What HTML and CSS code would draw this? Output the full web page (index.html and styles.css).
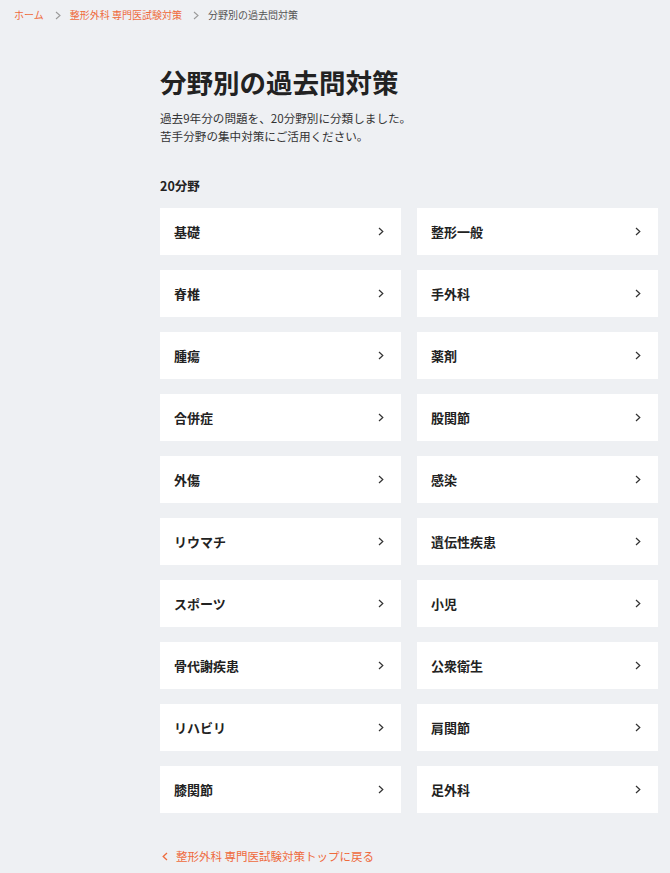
FILE: index.html
```html
<!DOCTYPE html>
<html lang="ja">
<head>
<meta charset="utf-8">
<title>分野別の過去問対策</title>
<link rel="stylesheet" href="styles.css">
</head>
<body>
<nav class="crumbs">
  <a class="crumb-link" href="#">ホーム</a>
  <span class="crumb-sep"><svg width="6" height="9" viewBox="0 0 6 9"><polyline points="1,1 5,4.5 1,8" fill="none" stroke="#9a9a9a" stroke-width="1.1"/></svg></span>
  <a class="crumb-link" href="#">整形外科 専門医試験対策</a>
  <span class="crumb-sep"><svg width="6" height="9" viewBox="0 0 6 9"><polyline points="1,1 5,4.5 1,8" fill="none" stroke="#9a9a9a" stroke-width="1.1"/></svg></span>
  <span class="crumb-current">分野別の過去問対策</span>
</nav>
<main class="main">
  <h1 class="title">分野別の過去問対策</h1>
  <p class="lead">過去9年分の問題を、20分野別に分類しました。<br>苦手分野の集中対策にご活用ください。</p>
  <h2 class="count">20分野</h2>
  <ul class="grid">
    <li><a class="card" href="#"><span>基礎</span><svg class="chev" viewBox="0 0 6 9"><polyline points="1,1 4.8,4.5 1,8"/></svg></a></li>
    <li><a class="card" href="#"><span>整形一般</span><svg class="chev" viewBox="0 0 6 9"><polyline points="1,1 4.8,4.5 1,8"/></svg></a></li>
    <li><a class="card" href="#"><span>脊椎</span><svg class="chev" viewBox="0 0 6 9"><polyline points="1,1 4.8,4.5 1,8"/></svg></a></li>
    <li><a class="card" href="#"><span>手外科</span><svg class="chev" viewBox="0 0 6 9"><polyline points="1,1 4.8,4.5 1,8"/></svg></a></li>
    <li><a class="card" href="#"><span>腫瘍</span><svg class="chev" viewBox="0 0 6 9"><polyline points="1,1 4.8,4.5 1,8"/></svg></a></li>
    <li><a class="card" href="#"><span>薬剤</span><svg class="chev" viewBox="0 0 6 9"><polyline points="1,1 4.8,4.5 1,8"/></svg></a></li>
    <li><a class="card" href="#"><span>合併症</span><svg class="chev" viewBox="0 0 6 9"><polyline points="1,1 4.8,4.5 1,8"/></svg></a></li>
    <li><a class="card" href="#"><span>股関節</span><svg class="chev" viewBox="0 0 6 9"><polyline points="1,1 4.8,4.5 1,8"/></svg></a></li>
    <li><a class="card" href="#"><span>外傷</span><svg class="chev" viewBox="0 0 6 9"><polyline points="1,1 4.8,4.5 1,8"/></svg></a></li>
    <li><a class="card" href="#"><span>感染</span><svg class="chev" viewBox="0 0 6 9"><polyline points="1,1 4.8,4.5 1,8"/></svg></a></li>
    <li><a class="card" href="#"><span>リウマチ</span><svg class="chev" viewBox="0 0 6 9"><polyline points="1,1 4.8,4.5 1,8"/></svg></a></li>
    <li><a class="card" href="#"><span>遺伝性疾患</span><svg class="chev" viewBox="0 0 6 9"><polyline points="1,1 4.8,4.5 1,8"/></svg></a></li>
    <li><a class="card" href="#"><span>スポーツ</span><svg class="chev" viewBox="0 0 6 9"><polyline points="1,1 4.8,4.5 1,8"/></svg></a></li>
    <li><a class="card" href="#"><span>小児</span><svg class="chev" viewBox="0 0 6 9"><polyline points="1,1 4.8,4.5 1,8"/></svg></a></li>
    <li><a class="card" href="#"><span>骨代謝疾患</span><svg class="chev" viewBox="0 0 6 9"><polyline points="1,1 4.8,4.5 1,8"/></svg></a></li>
    <li><a class="card" href="#"><span>公衆衛生</span><svg class="chev" viewBox="0 0 6 9"><polyline points="1,1 4.8,4.5 1,8"/></svg></a></li>
    <li><a class="card" href="#"><span>リハビリ</span><svg class="chev" viewBox="0 0 6 9"><polyline points="1,1 4.8,4.5 1,8"/></svg></a></li>
    <li><a class="card" href="#"><span>肩関節</span><svg class="chev" viewBox="0 0 6 9"><polyline points="1,1 4.8,4.5 1,8"/></svg></a></li>
    <li><a class="card" href="#"><span>膝関節</span><svg class="chev" viewBox="0 0 6 9"><polyline points="1,1 4.8,4.5 1,8"/></svg></a></li>
    <li><a class="card" href="#"><span>足外科</span><svg class="chev" viewBox="0 0 6 9"><polyline points="1,1 4.8,4.5 1,8"/></svg></a></li>
  </ul>
  <a class="back" href="#"><svg class="back-chev" viewBox="0 0 6 9"><polyline points="5,1 1.2,4.5 5,8"/></svg>整形外科 専門医試験対策トップに戻る</a>
</main>
</body>
</html>
```

FILE: styles.css
```css
html, body {
  margin: 0;
  padding: 0;
}
body {
  background: #eef0f3;
  color: #222;
  font-family: "Noto Sans CJK JP", "Noto Sans", sans-serif;
  width: 670px;
  min-height: 873px;
}
a {
  text-decoration: none;
}
.crumbs {
  display: flex;
  align-items: center;
  height: 30px;
  padding-left: 14px;
  font-size: 10px;
  line-height: 30px;
}
.crumb-link {
  color: #ee6a3c;
}
.crumb-sep {
  display: flex;
  align-items: center;
  margin: 0 9px 0 11px;
}
.crumb-current {
  color: #555;
}
.main {
  margin-left: 160px;
  width: 498px;
}
.title {
  margin: 34px 0 0;
  font-size: 26.5px;
  line-height: 36px;
  font-weight: 700;
  color: #222;
}
.lead {
  margin: 9px 0 0;
  font-size: 11.6px;
  line-height: 18px;
  color: #333;
}
.count {
  margin: 32px 0 0;
  font-size: 12.5px;
  line-height: 18px;
  font-weight: 700;
}
.grid {
  list-style: none;
  margin: 13px 0 0;
  padding: 0;
  display: grid;
  grid-template-columns: 1fr 1fr;
  column-gap: 16px;
  row-gap: 15px;
}
.card {
  display: flex;
  align-items: center;
  justify-content: space-between;
  height: 47px;
  padding: 0 17px 0 14px;
  background: #fff;
  color: #222;
  font-size: 13px;
  font-weight: 700;
}
.chev {
  width: 6px;
  height: 9px;
  fill: none;
  stroke: #333;
  stroke-width: 1.2;
}
.back {
  display: flex;
  align-items: center;
  margin-top: 34px;
  font-size: 11.5px;
  line-height: 18px;
  color: #ee6a3c;
}
.back-chev {
  width: 6px;
  height: 9px;
  margin: 0 8px 0 2px;
  fill: none;
  stroke: #ee6a3c;
  stroke-width: 1.3;
}
```
